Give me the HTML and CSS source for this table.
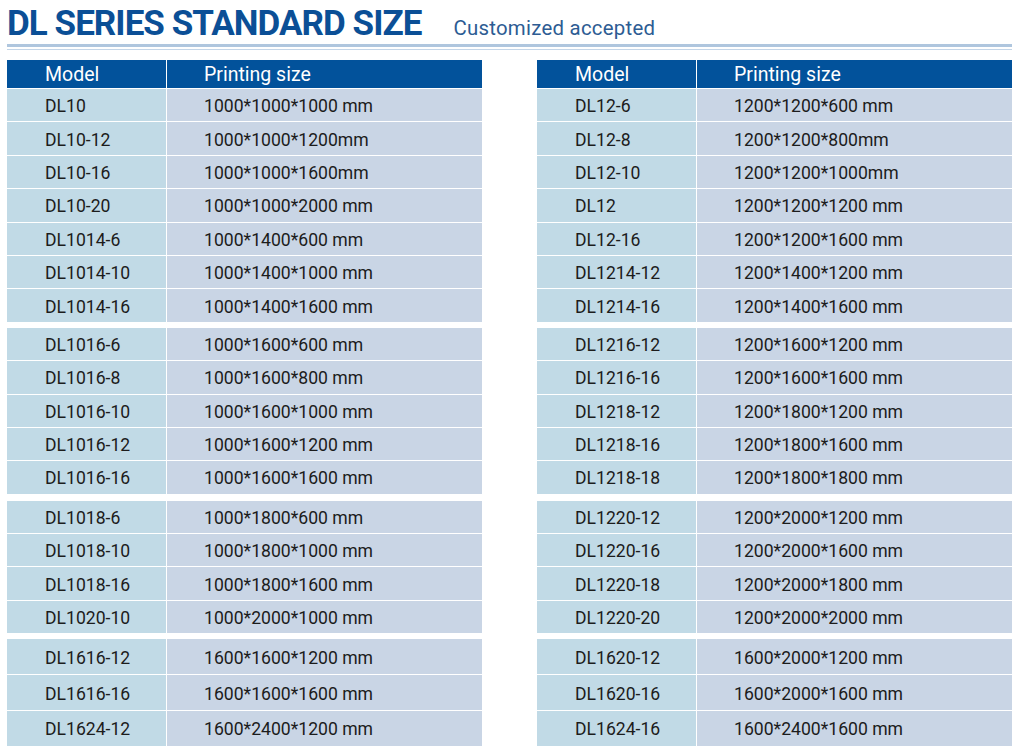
FILE: index.html
```html
<!DOCTYPE html>
<html>
<head>
<meta charset="utf-8">
<link rel="stylesheet" href="styles.css">
</head>
<body>
<div class="page">
  <div class="title-row">
    <h1 class="title">DL SERIES STANDARD SIZE</h1>
    <span class="subtitle">Customized accepted</span>
  </div>
  <div class="rule-thick"></div>
  <div class="rule-thin"></div>
  <div class="tables">
    <div class="table">
      <div class="head"><div class="c1">Model</div><div class="c2">Printing size</div></div>
      <div class="group">
        <div class="row"><div class="c1">DL10</div><div class="c2">1000*1000*1000 mm</div></div>
        <div class="row"><div class="c1">DL10-12</div><div class="c2">1000*1000*1200mm</div></div>
        <div class="row"><div class="c1">DL10-16</div><div class="c2">1000*1000*1600mm</div></div>
        <div class="row"><div class="c1">DL10-20</div><div class="c2">1000*1000*2000 mm</div></div>
        <div class="row"><div class="c1">DL1014-6</div><div class="c2">1000*1400*600 mm</div></div>
        <div class="row"><div class="c1">DL1014-10</div><div class="c2">1000*1400*1000 mm</div></div>
        <div class="row"><div class="c1">DL1014-16</div><div class="c2">1000*1400*1600 mm</div></div>
      </div>
      <div class="group">
        <div class="row"><div class="c1">DL1016-6</div><div class="c2">1000*1600*600 mm</div></div>
        <div class="row"><div class="c1">DL1016-8</div><div class="c2">1000*1600*800 mm</div></div>
        <div class="row"><div class="c1">DL1016-10</div><div class="c2">1000*1600*1000 mm</div></div>
        <div class="row"><div class="c1">DL1016-12</div><div class="c2">1000*1600*1200 mm</div></div>
        <div class="row"><div class="c1">DL1016-16</div><div class="c2">1000*1600*1600 mm</div></div>
      </div>
      <div class="group group-3">
        <div class="row"><div class="c1">DL1018-6</div><div class="c2">1000*1800*600 mm</div></div>
        <div class="row"><div class="c1">DL1018-10</div><div class="c2">1000*1800*1000 mm</div></div>
        <div class="row"><div class="c1">DL1018-16</div><div class="c2">1000*1800*1600 mm</div></div>
        <div class="row"><div class="c1">DL1020-10</div><div class="c2">1000*2000*1000 mm</div></div>
      </div>
      <div class="group group-tall">
        <div class="row"><div class="c1">DL1616-12</div><div class="c2">1600*1600*1200 mm</div></div>
        <div class="row"><div class="c1">DL1616-16</div><div class="c2">1600*1600*1600 mm</div></div>
        <div class="row"><div class="c1">DL1624-12</div><div class="c2">1600*2400*1200 mm</div></div>
      </div>
    </div>
    <div class="table">
      <div class="head"><div class="c1">Model</div><div class="c2">Printing size</div></div>
      <div class="group">
        <div class="row"><div class="c1">DL12-6</div><div class="c2">1200*1200*600 mm</div></div>
        <div class="row"><div class="c1">DL12-8</div><div class="c2">1200*1200*800mm</div></div>
        <div class="row"><div class="c1">DL12-10</div><div class="c2">1200*1200*1000mm</div></div>
        <div class="row"><div class="c1">DL12</div><div class="c2">1200*1200*1200 mm</div></div>
        <div class="row"><div class="c1">DL12-16</div><div class="c2">1200*1200*1600 mm</div></div>
        <div class="row"><div class="c1">DL1214-12</div><div class="c2">1200*1400*1200 mm</div></div>
        <div class="row"><div class="c1">DL1214-16</div><div class="c2">1200*1400*1600 mm</div></div>
      </div>
      <div class="group">
        <div class="row"><div class="c1">DL1216-12</div><div class="c2">1200*1600*1200 mm</div></div>
        <div class="row"><div class="c1">DL1216-16</div><div class="c2">1200*1600*1600 mm</div></div>
        <div class="row"><div class="c1">DL1218-12</div><div class="c2">1200*1800*1200 mm</div></div>
        <div class="row"><div class="c1">DL1218-16</div><div class="c2">1200*1800*1600 mm</div></div>
        <div class="row"><div class="c1">DL1218-18</div><div class="c2">1200*1800*1800 mm</div></div>
      </div>
      <div class="group group-3">
        <div class="row"><div class="c1">DL1220-12</div><div class="c2">1200*2000*1200 mm</div></div>
        <div class="row"><div class="c1">DL1220-16</div><div class="c2">1200*2000*1600 mm</div></div>
        <div class="row"><div class="c1">DL1220-18</div><div class="c2">1200*2000*1800 mm</div></div>
        <div class="row"><div class="c1">DL1220-20</div><div class="c2">1200*2000*2000 mm</div></div>
      </div>
      <div class="group group-tall">
        <div class="row"><div class="c1">DL1620-12</div><div class="c2">1600*2000*1200 mm</div></div>
        <div class="row"><div class="c1">DL1620-16</div><div class="c2">1600*2000*1600 mm</div></div>
        <div class="row"><div class="c1">DL1624-16</div><div class="c2">1600*2400*1600 mm</div></div>
      </div>
    </div>
  </div>
</div>
</body>
</html>
```

FILE: styles.css
```css
* { box-sizing: border-box; }
html, body { margin: 0; padding: 0; background: #ffffff; }
body { font-family: Roboto, "Liberation Sans", sans-serif; }

.page {
  width: 1018px;
  height: 750px;
  padding: 3px 6px 0 7px;
  overflow: hidden;
}

.title-row {
  display: flex;
  align-items: baseline;
  height: 41px;
}
.title {
  margin: 0;
  font-size: 35px;
  line-height: 41px;
  font-weight: 700;
  color: #0b4f96;
  letter-spacing: -0.95px;
}
.subtitle {
  margin-left: 32px;
  font-size: 20.4px;
  letter-spacing: 0.25px;
  color: #2d5c93;
}

.rule-thick {
  height: 3px;
  background: #afc6de;
}
.rule-thin {
  margin-top: 2px;
  height: 1px;
  background: #c3d5e8;
}

.tables {
  margin-top: 10px;
  display: flex;
  gap: 55px;
}
.table {
  width: 475px;
  display: flex;
  flex-direction: column;
}

.head, .row {
  display: grid;
  grid-template-columns: 159px 1fr;
  column-gap: 1px;
}
.head {
  height: 28px;
  background: #ffffff;
  margin-bottom: 1px;
  color: #ffffff;
  font-size: 19.5px;
  font-weight: 400;
}
.head .c1, .head .c2 {
  background: #02529b;
  display: flex;
  align-items: center;
}

.group {
  display: flex;
  flex-direction: column;
  gap: 1px;
}
.group + .group { margin-top: 6px; }
.group.group-3 { margin-top: 7px; }

.row {
  height: 32.4px;
  font-size: 17.6px;
  color: #1c1c1c;
}
.group-tall .row { height: 34.9px; }

.c1, .c2 {
  display: flex;
  align-items: center;
  padding-top: 2px;
}
.c1 { padding-left: 38px; background: #c1dae6; }
.c2 { padding-left: 37px; background: #c9d5e5; }
.head .c1, .head .c2 { padding-top: 0; }
```
